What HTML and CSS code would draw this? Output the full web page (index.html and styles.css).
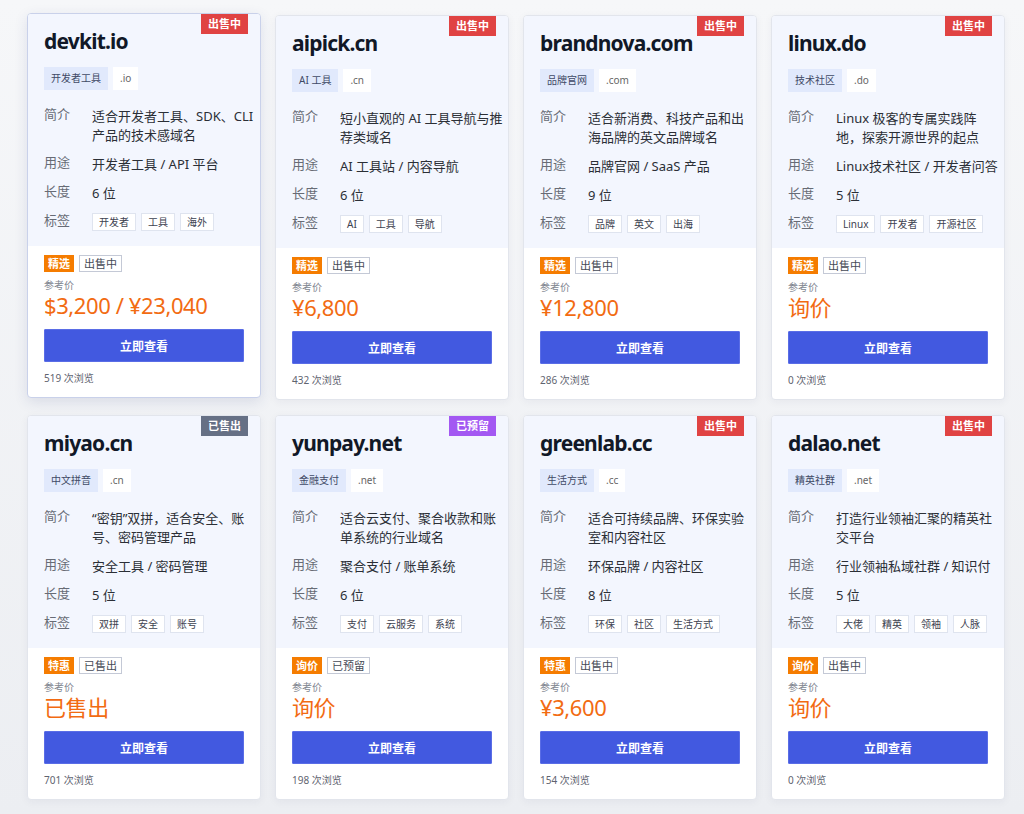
FILE: index.html
```html
<!DOCTYPE html>
<html lang="zh-CN">
<head>
    <meta charset="UTF-8">
    <meta name="viewport" content="width=device-width, initial-scale=1.0">
    <title>域名出售</title>
    <link rel="stylesheet" href="styles.css">
</head>
<body>
    <div class="grid">
        <div class="card is-active">
            <span class="status status-sale">出售中</span>
            <div class="card-top">
                <h2 class="domain">devkit.io</h2>
                <div class="chips">
                    <span class="chip chip-cat">开发者工具</span>
                    <span class="chip chip-tld">.io</span>
                </div>
                <div class="info">
                    <div class="row"><span class="label">简介</span><span class="value">适合开发者工具、SDK、CLI产品的技术感域名</span></div>
                    <div class="row"><span class="label">用途</span><span class="value one-line">开发者工具 / API 平台</span></div>
                    <div class="row"><span class="label">长度</span><span class="value">6 位</span></div>
                    <div class="row"><span class="label">标签</span><span class="value tags"><span class="tag">开发者</span><span class="tag">工具</span><span class="tag">海外</span></span></div>
                </div>
            </div>
            <div class="card-bottom">
                <div class="marks"><span class="mark">精选</span><span class="mark mark-outline">出售中</span></div>
                <div class="price-label">参考价</div>
                <div class="price">$3,200 / ¥23,040</div>
                <button class="view-btn">立即查看</button>
                <div class="views">519 次浏览</div>
            </div>
        </div>

        <div class="card">
            <span class="status status-sale">出售中</span>
            <div class="card-top">
                <h2 class="domain">aipick.cn</h2>
                <div class="chips">
                    <span class="chip chip-cat">AI 工具</span>
                    <span class="chip chip-tld">.cn</span>
                </div>
                <div class="info">
                    <div class="row"><span class="label">简介</span><span class="value">短小直观的 AI 工具导航与推荐类域名</span></div>
                    <div class="row"><span class="label">用途</span><span class="value one-line">AI 工具站 / 内容导航</span></div>
                    <div class="row"><span class="label">长度</span><span class="value">6 位</span></div>
                    <div class="row"><span class="label">标签</span><span class="value tags"><span class="tag">AI</span><span class="tag">工具</span><span class="tag">导航</span></span></div>
                </div>
            </div>
            <div class="card-bottom">
                <div class="marks"><span class="mark">精选</span><span class="mark mark-outline">出售中</span></div>
                <div class="price-label">参考价</div>
                <div class="price">¥6,800</div>
                <button class="view-btn">立即查看</button>
                <div class="views">432 次浏览</div>
            </div>
        </div>

        <div class="card">
            <span class="status status-sale">出售中</span>
            <div class="card-top">
                <h2 class="domain">brandnova.com</h2>
                <div class="chips">
                    <span class="chip chip-cat">品牌官网</span>
                    <span class="chip chip-tld">.com</span>
                </div>
                <div class="info">
                    <div class="row"><span class="label">简介</span><span class="value">适合新消费、科技产品和出海品牌的英文品牌域名</span></div>
                    <div class="row"><span class="label">用途</span><span class="value one-line">品牌官网 / SaaS 产品</span></div>
                    <div class="row"><span class="label">长度</span><span class="value">9 位</span></div>
                    <div class="row"><span class="label">标签</span><span class="value tags"><span class="tag">品牌</span><span class="tag">英文</span><span class="tag">出海</span></span></div>
                </div>
            </div>
            <div class="card-bottom">
                <div class="marks"><span class="mark">精选</span><span class="mark mark-outline">出售中</span></div>
                <div class="price-label">参考价</div>
                <div class="price">¥12,800</div>
                <button class="view-btn">立即查看</button>
                <div class="views">286 次浏览</div>
            </div>
        </div>

        <div class="card">
            <span class="status status-sale">出售中</span>
            <div class="card-top">
                <h2 class="domain">linux.do</h2>
                <div class="chips">
                    <span class="chip chip-cat">技术社区</span>
                    <span class="chip chip-tld">.do</span>
                </div>
                <div class="info">
                    <div class="row"><span class="label">简介</span><span class="value">Linux 极客的专属实践阵地，探索开源世界的起点</span></div>
                    <div class="row"><span class="label">用途</span><span class="value one-line">Linux技术社区 / 开发者问答</span></div>
                    <div class="row"><span class="label">长度</span><span class="value">5 位</span></div>
                    <div class="row"><span class="label">标签</span><span class="value tags"><span class="tag">Linux</span><span class="tag">开发者</span><span class="tag">开源社区</span></span></div>
                </div>
            </div>
            <div class="card-bottom">
                <div class="marks"><span class="mark">精选</span><span class="mark mark-outline">出售中</span></div>
                <div class="price-label">参考价</div>
                <div class="price">询价</div>
                <button class="view-btn">立即查看</button>
                <div class="views">0 次浏览</div>
            </div>
        </div>

        <div class="card">
            <span class="status status-sold">已售出</span>
            <div class="card-top">
                <h2 class="domain">miyao.cn</h2>
                <div class="chips">
                    <span class="chip chip-cat">中文拼音</span>
                    <span class="chip chip-tld">.cn</span>
                </div>
                <div class="info">
                    <div class="row"><span class="label">简介</span><span class="value">“密钥”双拼，适合安全、账号、密码管理产品</span></div>
                    <div class="row"><span class="label">用途</span><span class="value one-line">安全工具 / 密码管理</span></div>
                    <div class="row"><span class="label">长度</span><span class="value">5 位</span></div>
                    <div class="row"><span class="label">标签</span><span class="value tags"><span class="tag">双拼</span><span class="tag">安全</span><span class="tag">账号</span></span></div>
                </div>
            </div>
            <div class="card-bottom">
                <div class="marks"><span class="mark">特惠</span><span class="mark mark-outline">已售出</span></div>
                <div class="price-label">参考价</div>
                <div class="price">已售出</div>
                <button class="view-btn">立即查看</button>
                <div class="views">701 次浏览</div>
            </div>
        </div>

        <div class="card">
            <span class="status status-held">已预留</span>
            <div class="card-top">
                <h2 class="domain">yunpay.net</h2>
                <div class="chips">
                    <span class="chip chip-cat">金融支付</span>
                    <span class="chip chip-tld">.net</span>
                </div>
                <div class="info">
                    <div class="row"><span class="label">简介</span><span class="value">适合云支付、聚合收款和账单系统的行业域名</span></div>
                    <div class="row"><span class="label">用途</span><span class="value one-line">聚合支付 / 账单系统</span></div>
                    <div class="row"><span class="label">长度</span><span class="value">6 位</span></div>
                    <div class="row"><span class="label">标签</span><span class="value tags"><span class="tag">支付</span><span class="tag">云服务</span><span class="tag">系统</span></span></div>
                </div>
            </div>
            <div class="card-bottom">
                <div class="marks"><span class="mark">询价</span><span class="mark mark-outline">已预留</span></div>
                <div class="price-label">参考价</div>
                <div class="price">询价</div>
                <button class="view-btn">立即查看</button>
                <div class="views">198 次浏览</div>
            </div>
        </div>

        <div class="card">
            <span class="status status-sale">出售中</span>
            <div class="card-top">
                <h2 class="domain">greenlab.cc</h2>
                <div class="chips">
                    <span class="chip chip-cat">生活方式</span>
                    <span class="chip chip-tld">.cc</span>
                </div>
                <div class="info">
                    <div class="row"><span class="label">简介</span><span class="value">适合可持续品牌、环保实验室和内容社区</span></div>
                    <div class="row"><span class="label">用途</span><span class="value one-line">环保品牌 / 内容社区</span></div>
                    <div class="row"><span class="label">长度</span><span class="value">8 位</span></div>
                    <div class="row"><span class="label">标签</span><span class="value tags"><span class="tag">环保</span><span class="tag">社区</span><span class="tag">生活方式</span></span></div>
                </div>
            </div>
            <div class="card-bottom">
                <div class="marks"><span class="mark">特惠</span><span class="mark mark-outline">出售中</span></div>
                <div class="price-label">参考价</div>
                <div class="price">¥3,600</div>
                <button class="view-btn">立即查看</button>
                <div class="views">154 次浏览</div>
            </div>
        </div>

        <div class="card">
            <span class="status status-sale">出售中</span>
            <div class="card-top">
                <h2 class="domain">dalao.net</h2>
                <div class="chips">
                    <span class="chip chip-cat">精英社群</span>
                    <span class="chip chip-tld">.net</span>
                </div>
                <div class="info">
                    <div class="row"><span class="label">简介</span><span class="value">打造行业领袖汇聚的精英社交平台</span></div>
                    <div class="row"><span class="label">用途</span><span class="value one-line">行业领袖私域社群 / 知识付</span></div>
                    <div class="row"><span class="label">长度</span><span class="value">5 位</span></div>
                    <div class="row"><span class="label">标签</span><span class="value tags"><span class="tag">大佬</span><span class="tag">精英</span><span class="tag">领袖</span><span class="tag">人脉</span></span></div>
                </div>
            </div>
            <div class="card-bottom">
                <div class="marks"><span class="mark">询价</span><span class="mark mark-outline">出售中</span></div>
                <div class="price-label">参考价</div>
                <div class="price">询价</div>
                <button class="view-btn">立即查看</button>
                <div class="views">0 次浏览</div>
            </div>
        </div>
    </div>
</body>
</html>
```

FILE: styles.css
```css
* {
    margin: 0;
    padding: 0;
    box-sizing: border-box;
}

body {
    font-family: "Noto Sans", "Noto Sans CJK SC", sans-serif;
    background: linear-gradient(to bottom, #f6f7f9, #eceef2);
    color: #333;
    min-height: 100vh;
}

.grid {
    display: grid;
    grid-template-columns: repeat(4, 234px);
    column-gap: 14px;
    row-gap: 15px;
    padding: 15px 0 0 27px;
}

.card {
    position: relative;
    background: #fff;
    border: 1px solid #e2e5ec;
    border-radius: 4px;
    overflow: hidden;
    box-shadow: 0 2px 8px rgba(30, 40, 70, 0.05);
}

.card.is-active {
    transform: translateY(-2px);
    border-color: #c9d1ea;
    box-shadow: 0 4px 14px rgba(40, 60, 120, 0.12);
}

.status {
    position: absolute;
    top: 0;
    right: 12px;
    height: 20px;
    line-height: 20px;
    padding: 0 7px;
    font-size: 11px;
    font-weight: 700;
    color: #fff;
}

.status-sale {
    background: #e04343;
}

.status-sold {
    background: #667085;
}

.status-held {
    background: #a358f2;
}

.card-top {
    background: #f3f6fe;
    padding: 13px 16px 15px;
}

.domain {
    font-size: 21px;
    line-height: 28px;
    font-weight: 700;
    letter-spacing: -0.8px;
    color: #111827;
}

.chips {
    display: flex;
    gap: 5px;
    margin-top: 12px;
}

.chip {
    height: 23px;
    line-height: 23px;
    padding: 0 7px;
    font-size: 10px;
}

.chip-cat {
    background: #e1e9fc;
    color: #3f4a66;
}

.chip-tld {
    background: #fff;
    color: #666;
}

.info {
    margin-top: 17px;
    margin-right: -14px;
    display: flex;
    flex-direction: column;
    gap: 10px;
}

.row {
    display: flex;
}

.label {
    width: 48px;
    flex-shrink: 0;
    font-size: 13px;
    line-height: 14px;
    color: #676b75;
}

.value {
    flex: 1;
    font-size: 13px;
    line-height: 19px;
    color: #2b2f36;
}

.one-line {
    white-space: nowrap;
    overflow: hidden;
}

.tags {
    display: flex;
    align-items: center;
    gap: 5px;
}

.tag {
    height: 18px;
    line-height: 16px;
    padding: 0 6px;
    font-size: 10px;
    background: #fff;
    border: 1px solid #dfe4ef;
    color: #3d4250;
}

.card-bottom {
    padding: 9px 16px 12px;
}

.marks {
    display: flex;
    gap: 5px;
}

.mark {
    height: 17px;
    line-height: 17px;
    padding: 0 4px;
    font-size: 11px;
    font-weight: 700;
    color: #fff;
    background: #f57c00;
}

.mark-outline {
    line-height: 15px;
    padding: 0 4px;
    font-weight: 400;
    color: #464b57;
    background: #fff;
    border: 1px solid #c4c9d6;
}

.price-label {
    margin-top: 6px;
    font-size: 10px;
    line-height: 14px;
    color: #80858f;
}

.price {
    font-size: 22px;
    line-height: 26px;
    letter-spacing: -0.4px;
    color: #f26b12;
}

.view-btn {
    display: block;
    width: 100%;
    height: 33px;
    margin-top: 11px;
    border: 1px solid #5a6de6;
    border-radius: 1px;
    background: #4259e0;
    color: #fff;
    font-family: inherit;
    font-size: 12px;
    font-weight: 700;
    cursor: pointer;
}

.views {
    margin-top: 9px;
    font-size: 10px;
    line-height: 14px;
    color: #5f6470;
}
```
